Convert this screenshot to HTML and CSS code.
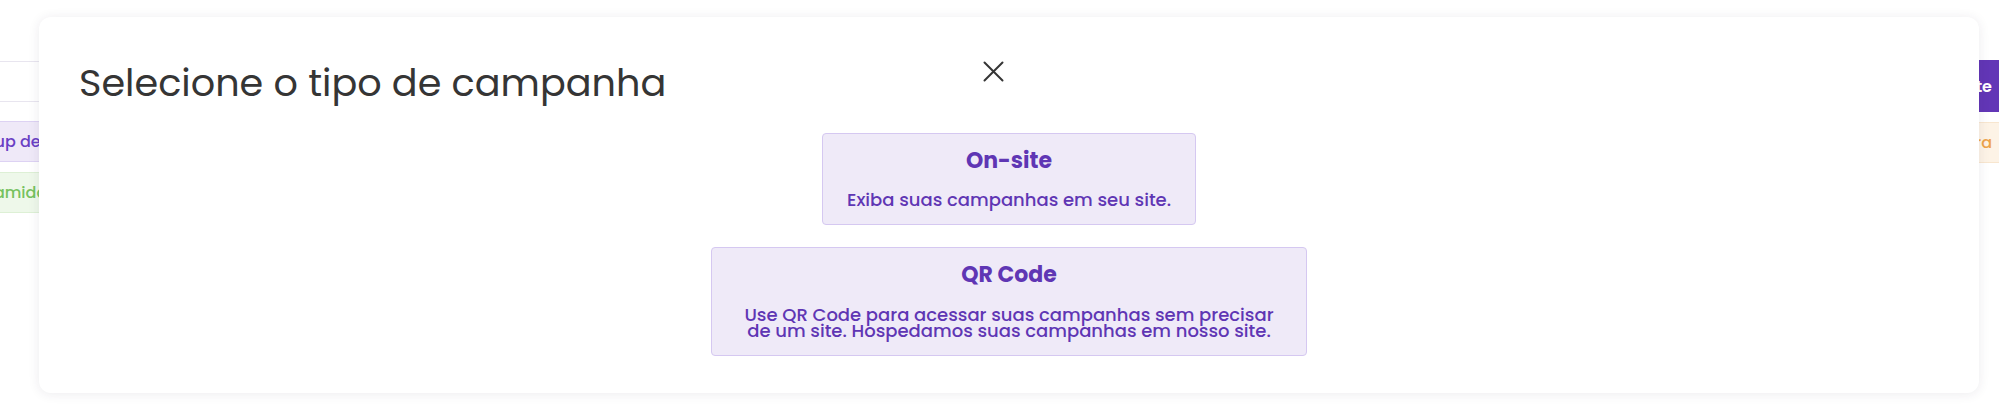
FILE: index.html
```html
<!DOCTYPE html>
<html lang="pt-BR">
<head>
    <meta charset="UTF-8">
    <meta name="viewport" content="width=device-width, initial-scale=1.0">
    <title>Campanhas</title>
    <link rel="stylesheet" href="styles.css">
</head>
<body>

<!-- page behind the modal -->
<div class="page">
    <div class="toolbar">
        <div class="search"></div>
        <button class="btn-primary">Integrar site</button>
    </div>
    <div class="row">
        <span class="tag tag-purple">Popup de saída</span>
        <span class="tag tag-orange">Em espera</span>
    </div>
    <div class="row">
        <span class="tag tag-green">Piramidal</span>
    </div>
</div>

<!-- modal -->
<div class="modal">
    <div class="modal-header">
        <h2 class="modal-title">Selecione o tipo de campanha</h2>
        <button class="close" aria-label="Fechar">
            <svg width="21" height="21" viewBox="0 0 21 21">
                <path d="M1.5 1.5 L19.5 19.5 M19.5 1.5 L1.5 19.5" stroke="#353535" stroke-width="2" stroke-linecap="round" fill="none"/>
            </svg>
        </button>
    </div>
    <div class="options">
        <div class="option option-onsite">
            <div class="option-title">On-site</div>
            <div class="option-text">Exiba suas campanhas em seu site.</div>
        </div>
        <div class="option option-qr">
            <div class="option-title">QR Code</div>
            <div class="option-text">Use QR Code para acessar suas campanhas sem precisar<br>de um site. Hospedamos suas campanhas em nosso site.</div>
        </div>
    </div>
</div>

</body>
</html>
```

FILE: styles.css
```css
body {
    margin: 0;
    font-family: "Poppins", "Inter", sans-serif;
    font-size: 16px;
    background-color: #fff;
    overflow: hidden;
}

/* background page */
.page {
    display: flex;
    flex-direction: column;
    gap: 9px;
    padding-top: 60px;
    margin: 0 -32px;
}
.toolbar {
    display: flex;
    justify-content: space-between;
    align-items: flex-start;
}
.search {
    width: 700px;
    height: 41px;
    margin-top: 1px;
    box-sizing: border-box;
    border: 1px solid #e8e5ef;
    border-radius: 6px;
}
.btn-primary {
    height: 52px;
    padding: 0 39px;
    border: none;
    border-radius: 6px;
    background-color: #6236b6;
    color: #fff;
    font-family: inherit;
    font-size: 16px;
    font-weight: 600;
}
.row {
    display: flex;
    justify-content: space-between;
    align-items: flex-start;
}
.tag {
    display: inline-flex;
    align-items: center;
    height: 41px;
    padding: 0 12px;
    box-sizing: border-box;
    border-radius: 4px;
    font-weight: 500;
}
.tag-purple {
    margin-left: -17px;
    background-color: #efe9f8;
    border: 1px solid #ddd2f3;
    color: #6a40c4;
}
.tag-green {
    margin-left: -7px;
    background-color: #eef8ea;
    border: 1px solid #ddf0d5;
    color: #76c25f;
}
.tag-orange {
    margin-top: 1px;
    margin-right: 26px;
    background-color: #fdf3e6;
    border: 1px solid #f8e6cf;
    color: #eea44a;
}

/* modal */
.modal {
    position: absolute;
    left: 39px;
    top: 17px;
    width: 1940px;
    height: 376px;
    box-sizing: border-box;
    padding: 43px 40px 0;
    background-color: #fff;
    border-radius: 12px;
    box-shadow: 0 1px 12px rgba(40, 30, 70, 0.09);
}
.modal-header {
    display: grid;
    grid-template-columns: 904px 21px;
    align-items: start;
}
.modal-title {
    margin: 0;
    font-size: 38.2px;
    font-weight: 400;
    line-height: 1.2;
    color: #353535;
}
.close {
    width: 21px;
    height: 21px;
    margin-top: 1px;
    padding: 0;
    border: none;
    background: none;
}
.close svg {
    display: block;
}

.options {
    display: flex;
    flex-direction: column;
    align-items: center;
    gap: 22px;
    margin-top: 27px;
}
.option {
    box-sizing: border-box;
    padding: 14px 0 16px;
    background-color: #efeaf8;
    border: 1px solid #d5c8f1;
    border-radius: 4px;
    text-align: center;
    color: #5f36b4;
}
.option-onsite {
    width: 374px;
}
.option-qr {
    width: 596px;
}
.option-title {
    font-size: 22px;
    font-weight: 700;
    line-height: 1.2;
    margin-bottom: 18px;
}
.option-text {
    font-size: 18px;
    font-weight: 500;
    line-height: 16px;
}
```
